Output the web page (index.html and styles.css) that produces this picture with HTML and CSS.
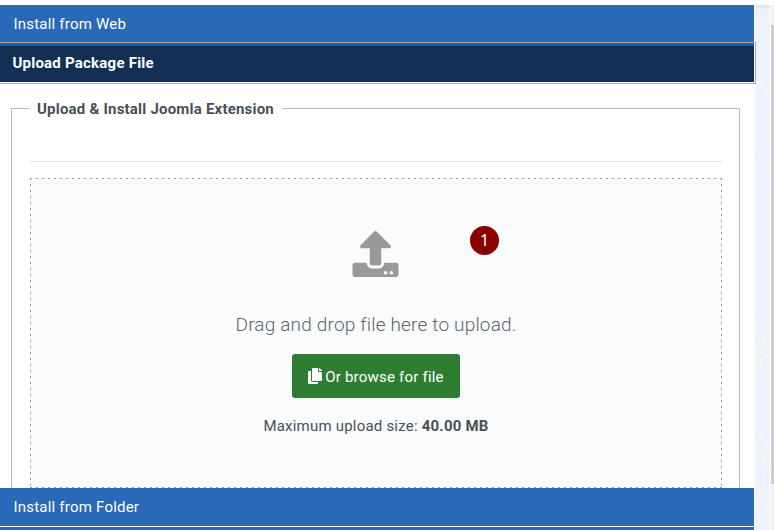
FILE: index.html
```html
<!DOCTYPE html>
<html lang="en">
<head>
<meta charset="utf-8">
<title>Install Extensions</title>
<link rel="stylesheet" href="styles.css">
</head>
<body>
<div class="page">
  <main class="panel">
    <button class="tab">Install from Web</button>
    <button class="tab tab-active"><span>Upload Package File</span></button>
    <section class="content">
      <fieldset class="options">
        <legend>Upload &amp; Install Joomla Extension</legend>
        <hr>
        <div class="dropzone">
          <svg class="upload-icon" viewBox="0 0 512 512"><path d="M296 384h-80c-13.3 0-24-10.7-24-24V192h-87.7c-17.8 0-26.7-21.5-14.1-34.1L242.3 5.7c7.5-7.5 19.8-7.5 27.3 0l152.2 152.2c12.6 12.6 3.7 34.1-14.1 34.1H320v168c0 13.3-10.7 24-24 24zm216-8v112c0 13.3-10.7 24-24 24H24c-13.3 0-24-10.7-24-24V376c0-13.3 10.7-24 24-24h136v8c0 30.9 25.1 56 56 56h80c30.9 0 56-25.1 56-56v-8h136c13.3 0 24 10.7 24 24zm-124 88c0-11-9-20-20-20s-20 9-20 20 9 20 20 20 20-9 20-20zm64 0c0-11-9-20-20-20s-20 9-20 20 9 20 20 20 20-9 20-20z"/></svg>
          <p class="lead">Drag and drop file here to upload.</p>
          <button class="browse"><svg viewBox="0 0 448 512"><path d="M320 448v40c0 13.255-10.745 24-24 24H24c-13.255 0-24-10.745-24-24V120c0-13.255 10.745-24 24-24h72v296c0 30.879 25.121 56 56 56h168zm0-344V0H152c-13.255 0-24 10.745-24 24v368c0 13.255 10.745 24 24 24h272c13.255 0 24-10.745 24-24V128H344c-13.2 0-24-10.8-24-24zm120.971-31.029L375.029 7.029A24 24 0 0 0 358.059 0H352v96h96v-6.059a24 24 0 0 0-7.029-16.97z"/></svg><span>Or browse for file</span></button>
          <p class="limit">Maximum upload size: <strong>40.00 MB</strong></p>
          <span class="badge">1</span>
        </div>
      </fieldset>
    </section>
    <button class="tab tab-folder">Install from Folder</button>
    <div class="tab-next"></div>
  </main>
  <aside class="backdrop">
    <svg viewBox="0 0 15 525"><path d="M0 55l15 15M0 75l15 15M0 158l15-15M0 178l15-15M0 343l15-15M0 363l15-15M0 425l15 15M0 445l15 15M0 525l15-13"/><path class="faint" d="M0 305Q9 313 9 325V343Q9 363 0 370M15 445Q8 453 8 465V485Q8 500 15 508"/></svg>
  </aside>
  <div class="scrollbar"><div class="thumb"></div></div>
</div>
</body>
</html>
```
FILE: styles.css
```css
* { box-sizing: border-box; }
body {
  margin: 0;
  background: #fff;
  color: #495057;
  font: 15px/24px Roboto, "Liberation Sans", sans-serif;
  letter-spacing: 0.21px;
  overflow: hidden;
}
.page { display: flex; width: 774px; height: 530px; padding-top: 5px; }
.panel { display: flex; flex-direction: column; width: 755px; height: 525px; }
button { border: 0; margin: 0; font: inherit; letter-spacing: inherit; text-align: left; }
.tab {
  width: 754px;
  height: 37px;
  padding: 0 13.4px;
  background: #2a69b8;
  color: #fff;
  flex: none;
  letter-spacing: 0.22px;
}
.tab-active {
  position: relative;
  width: 756px;
  height: 42px;
  padding: 0;
  border: solid #a6abb3;
  border-width: 1px 1px 1px 0;
  background: #fff;
  font-weight: 700;
  letter-spacing: 0.23px;
}
.tab-active span {
  display: block;
  width: 754px;
  height: 39px;
  margin-bottom: 1px;
  padding-left: 12.4px;
  border-top: 3px solid #2258a0;
  background: #132f53;
  line-height: 34px;
}
.content { height: 404px; padding: 13px 15px 0 11px; overflow: hidden; }
.options {
  width: 729px;
  height: 440px;
  margin: 0;
  padding: 0 17px 0 18px;
  border: 1px solid #b1bcc9;
}
legend { height: 23px; padding: 0 8px 0 7px; font-weight: 700; line-height: 24px; }
hr { height: 1px; margin: 41px 0 16px; border: 0; background: #e1e3e6; }
.dropzone {
  position: relative;
  display: flex;
  flex-direction: column;
  align-items: center;
  width: 692px;
  height: 310px;
  padding-top: 53px;
  background:
    repeating-linear-gradient(90deg, #999 0 2px, transparent 2px 6px) 0 0 / 100% 1px no-repeat,
    repeating-linear-gradient(90deg, #999 0 2px, transparent 2px 6px) 0 100% / 100% 1px no-repeat,
    repeating-linear-gradient(#999 0 2px, transparent 2px 6px) 0 0 / 1px 100% no-repeat,
    repeating-linear-gradient(#999 0 2px, transparent 2px 6px) 100% 0 / 1px 100% no-repeat,
    #fafbfd;
}
.upload-icon { width: 47px; height: 46px; margin-right: 2px; fill: #999; }
p { margin: 0; }
.lead { margin-top: 33px; color: #5e646a; font-size: 19px; font-weight: 300; line-height: 30px; letter-spacing: 0.18px; }
.browse {
  display: flex;
  align-items: center;
  justify-content: center;
  gap: 3px;
  width: 168px;
  height: 44px;
  margin-top: 14px;
  padding: 0;
  border-radius: 3px;
  background: #2f7d32;
  color: #fff;
}
.browse svg { width: 14px; height: 16px; fill: #fff; }
.browse span { padding-top: 1px; }
.limit { margin-top: 16px; }
.badge {
  position: absolute;
  left: 440px;
  top: 48px;
  width: 29px;
  height: 29px;
  border-radius: 50%;
  background: #8b0000;
  color: #fff;
  font: 16px/29px "Noto Sans", sans-serif;
  letter-spacing: 0;
  text-align: center;
}
.tab-folder { height: 38px; }
.tab-next { width: 754px; height: 3px; margin-top: 1px; background: #2a69b8; }
.backdrop { width: 15px; background: linear-gradient(#dfe4ec, #eef3fb 5px); }
.backdrop svg { display: block; width: 15px; height: 525px; fill: none; stroke: #f8fafc; }
.backdrop .faint { opacity: .5; }
.scrollbar { width: 3px; margin-left: 1px; padding-top: 20px; background: #f0f0f0; }
.thumb { height: 459px; background: #cbcccb; }
```
